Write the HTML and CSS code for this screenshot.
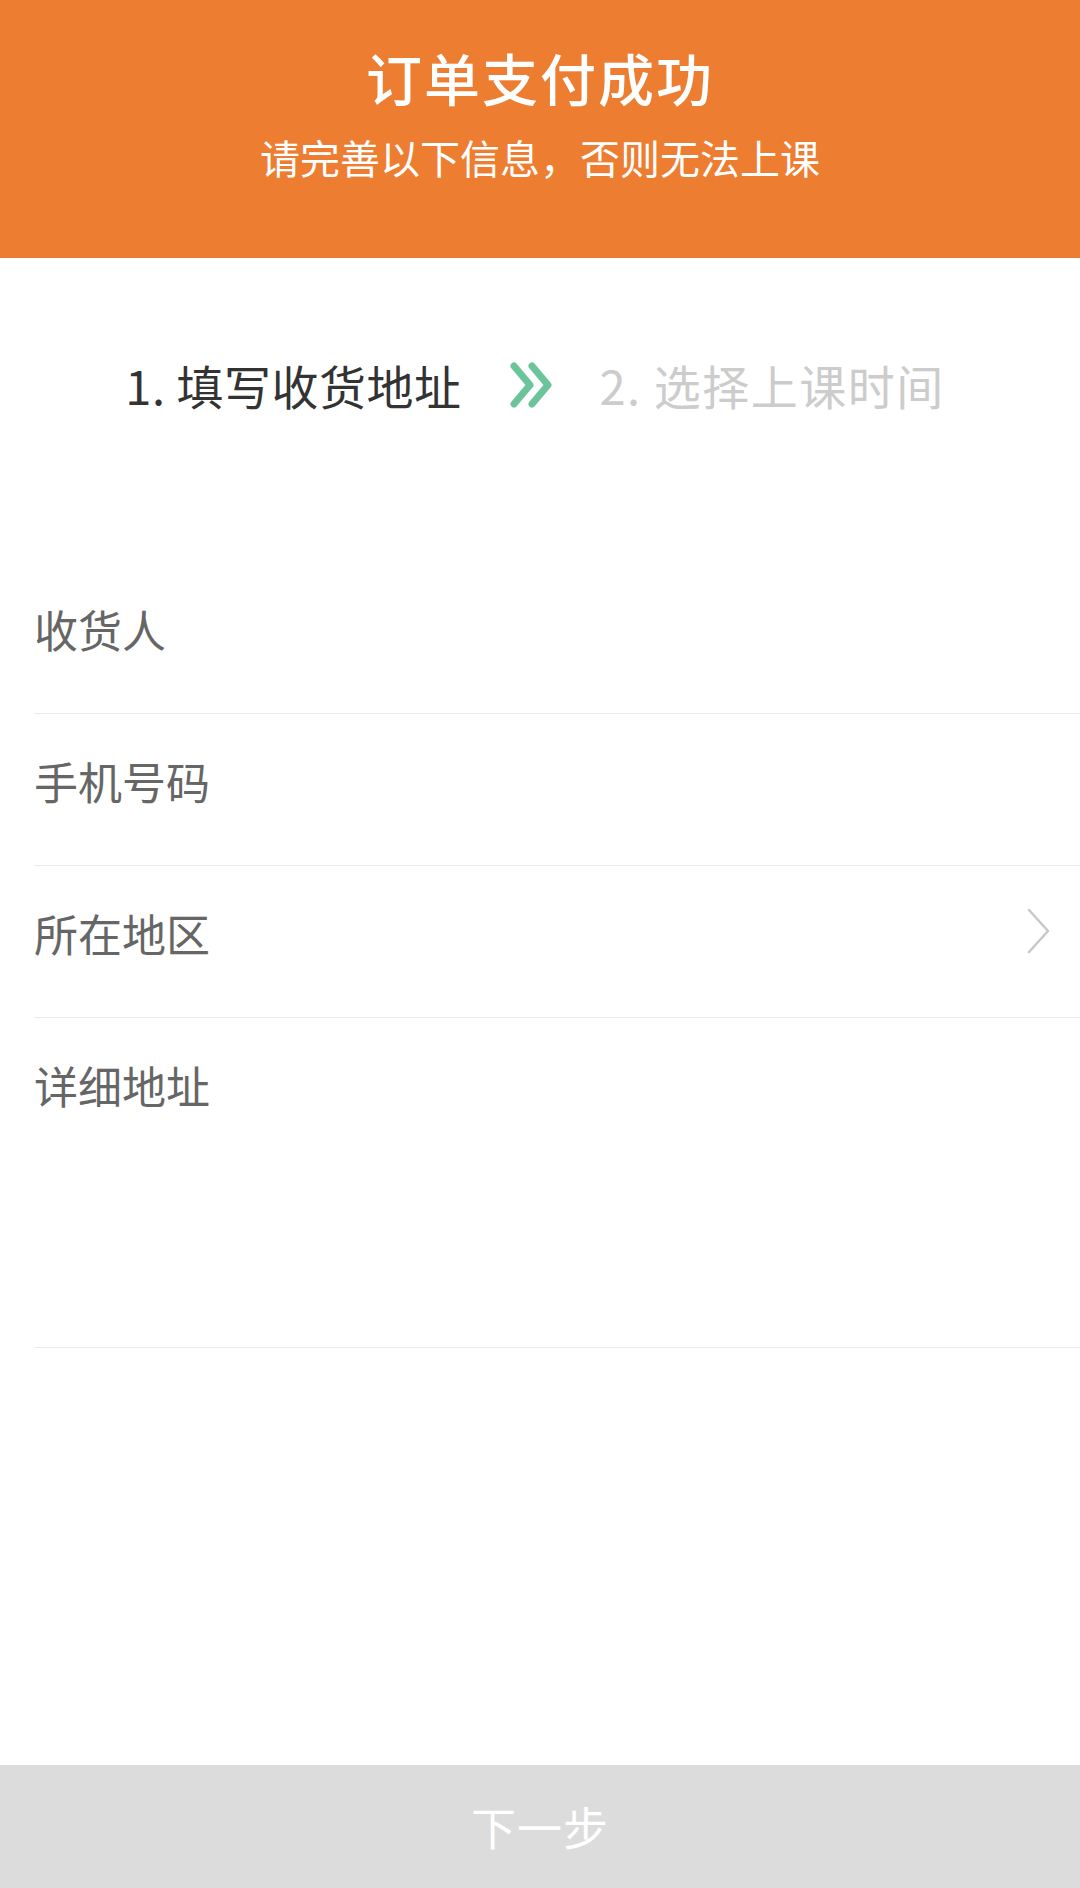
FILE: index.html
```html
<!DOCTYPE html>
<html lang="zh-CN">
<head>
<meta charset="utf-8">
<title>订单支付成功</title>
<link rel="stylesheet" href="styles.css">
</head>
<body>
<div class="page">
  <header class="header">
    <div class="title">订单支付成功</div>
    <div class="subtitle">请完善以下信息，否则无法上课</div>
  </header>

  <section class="steps">
    <span class="step step-active">1. 填写收货地址</span>
    <svg class="step-arrow" width="48" height="46" viewBox="0 0 48 46" aria-hidden="true">
      <polyline points="4,4 20,23 4,42" fill="none" stroke="#6cc49a" stroke-width="7" stroke-linecap="round" stroke-linejoin="round"/>
      <polyline points="22,4 38,23 22,42" fill="none" stroke="#6cc49a" stroke-width="7" stroke-linecap="round" stroke-linejoin="round"/>
    </svg>
    <span class="step step-next">2. 选择上课时间</span>
  </section>

  <section class="form">
    <div class="row"><span class="label">收货人</span></div>
    <div class="row"><span class="label">手机号码</span></div>
    <div class="row">
      <span class="label">所在地区</span>
      <svg class="row-arrow" width="24" height="46" viewBox="0 0 24 46" aria-hidden="true">
        <polyline points="2,2 21,23 2,44" fill="none" stroke="#c8c8c8" stroke-width="2.5" stroke-linecap="round" stroke-linejoin="round"/>
      </svg>
    </div>
    <div class="row row-tall"><span class="label">详细地址</span></div>
  </section>

  <div class="spacer"></div>

  <footer class="next-btn">下一步</footer>
</div>
</body>
</html>
```

FILE: styles.css
```css
* {
  box-sizing: border-box;
}

html, body {
  margin: 0;
  padding: 0;
  background: #ffffff;
}

body {
  font-family: "Noto Sans CJK SC", "Noto Sans", "Liberation Sans", sans-serif;
}

.page {
  width: 1080px;
  height: 1888px;
  display: flex;
  flex-direction: column;
  overflow: hidden;
}

.header {
  height: 258px;
  background: #ed7d31;
  color: #ffffff;
  display: flex;
  flex-direction: column;
  align-items: center;
  padding-top: 45px;
  flex-shrink: 0;
}

.title {
  font-size: 56px;
  line-height: 64px;
  font-weight: 500;
  letter-spacing: 2px;
}

.subtitle {
  margin-top: 20px;
  font-size: 40px;
  line-height: 56px;
  font-weight: 400;
  letter-spacing: 0;
}

.steps {
  height: 304px;
  padding-top: 97px;
  padding-right: 10px;
  display: flex;
  justify-content: center;
  align-items: flex-start;
  flex-shrink: 0;
}

.step {
  font-size: 47px;
  line-height: 60px;
  height: 60px;
  letter-spacing: 0.5px;
}

.step-active {
  color: #333333;
}

.step-next {
  color: #cccccc;
  letter-spacing: 1.5px;
}

.step-arrow {
  margin: 7px 42px 0 48px;
  display: block;
}

.form {
  display: flex;
  flex-direction: column;
  padding-left: 34px;
  flex-shrink: 0;
}

.row {
  height: 152px;
  border-bottom: 1px solid #ebebeb;
  padding-top: 42px;
  padding-right: 29px;
  display: flex;
  justify-content: space-between;
  align-items: flex-start;
}

.row-tall {
  height: 330px;
}

.label {
  font-size: 44px;
  line-height: 50px;
  color: #666666;
}

.row-arrow {
  display: block;
}

.spacer {
  flex: 1;
}

.next-btn {
  height: 123px;
  flex-shrink: 0;
  background: #dcdcdc;
  color: #ffffff;
  font-size: 45px;
  line-height: 123px;
  text-align: center;
  letter-spacing: 1px;
}
```
